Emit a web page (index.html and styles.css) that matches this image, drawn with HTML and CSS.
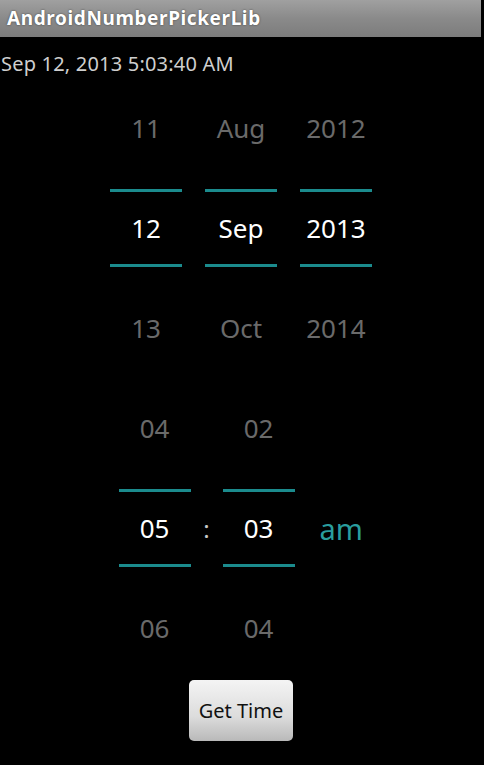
FILE: index.html
```html
<!DOCTYPE html>
<html>
<head>
<meta charset="utf-8">
<link rel="stylesheet" href="styles.css">
</head>
<body>
<div class="screen">
  <div class="titlebar">AndroidNumberPickerLib</div>
  <div class="datetext">Sep 12, 2013 5:03:40 AM</div>

  <div class="picker-row date-row">
    <div class="picker">
      <div class="item">11</div>
      <div class="item sel">12</div>
      <div class="item">13</div>
    </div>
    <div class="picker">
      <div class="item">Aug</div>
      <div class="item sel">Sep</div>
      <div class="item">Oct</div>
    </div>
    <div class="picker">
      <div class="item">2012</div>
      <div class="item sel">2013</div>
      <div class="item">2014</div>
    </div>
  </div>

  <div class="picker-row time-row">
    <div class="picker">
      <div class="item">04</div>
      <div class="item sel">05</div>
      <div class="item">06</div>
    </div>
    <div class="colon">:</div>
    <div class="picker">
      <div class="item">02</div>
      <div class="item sel">03</div>
      <div class="item">04</div>
    </div>
    <div class="ampm">am</div>
  </div>

  <div class="btn-row">
    <button class="btn">Get Time</button>
  </div>
</div>
</body>
</html>
```
FILE: styles.css
```css
html, body {
  margin: 0;
  padding: 0;
  background: #000;
}
body {
  width: 484px;
  height: 765px;
  overflow: hidden;
  font-family: "Noto Sans", "Open Sans", sans-serif;
}
.screen {
  width: 482px;
  display: flex;
  flex-direction: column;
}
.titlebar {
  width: 481px;
  height: 37px;
  box-sizing: border-box;
  background: linear-gradient(#a0a0a0, #8a8a8a 50%, #7c7c7c);
  color: #fff;
  font-weight: bold;
  font-size: 19px;
  letter-spacing: 0.6px;
  line-height: 37px;
  padding-left: 7px;
  text-shadow: 0 0 2px rgba(0,0,0,0.6);
}
.datetext {
  color: #cfcfcf;
  font-size: 20px;
  letter-spacing: 0.2px;
  line-height: 26px;
  padding: 14px 0 0 1px;
  height: 27px;
}
.picker-row {
  display: flex;
  justify-content: center;
  align-items: center;
}
.date-row {
  gap: 23px;
}
.picker {
  width: 72px;
  display: flex;
  flex-direction: column;
}
.item {
  height: 100px;
  display: flex;
  align-items: center;
  justify-content: center;
  color: #6a6a6a;
  font-size: 26px;
}
.item.sel {
  color: #fff;
  height: 72px;
  margin: 11px 0;
  border-top: 3px solid #1b8b8d;
  border-bottom: 3px solid #1b8b8d;
}
.time-row {
  padding-right: 4px;
}
.colon {
  width: 32px;
  text-align: center;
  color: #c8c8c8;
  font-size: 24px;
}
.ampm {
  width: 40px;
  margin-left: 25px;
  color: #2a9d9e;
  font-size: 29px;
}
.btn-row {
  display: flex;
  justify-content: center;
  margin-top: 2px;
}
.btn {
  width: 104px;
  height: 61px;
  border: none;
  border-radius: 5px;
  background: linear-gradient(#f4f4f4, #dcdcdc 60%, #b9b9b9);
  color: #111;
  font-family: "Noto Sans", "Open Sans", sans-serif;
  font-size: 20px;
  padding: 0;
}
```
